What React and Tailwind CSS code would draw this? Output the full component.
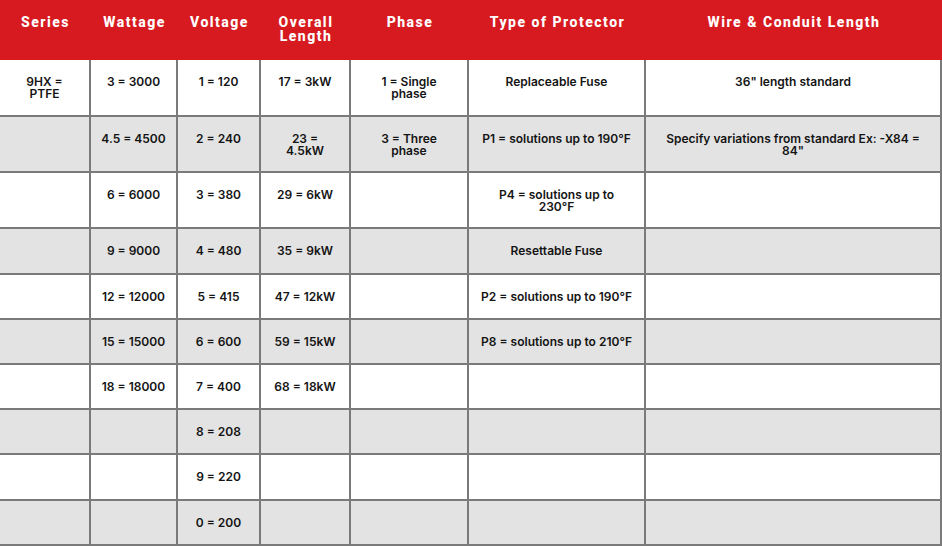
import React from 'react';

const cols = [
    { title: 'Series', w: 'w-[91px]' },
    { title: 'Wattage', w: 'w-[87px]' },
    { title: 'Voltage', w: 'w-[83px]' },
    { title: ['Overall', 'Length'], w: 'w-[90px]' },
    { title: 'Phase', w: 'w-[118px]' },
    { title: 'Type of Protector', w: 'w-[177px]' },
    { title: 'Wire & Conduit Length', w: 'w-[296px]' },
];

const rows = [
    { h: 'h-[57px]', cells: [['9HX =', 'PTFE'], '3 = 3000', '1 = 120', '17 = 3kW', ['1 = Single', 'phase'], 'Replaceable Fuse', '36" length standard'] },
    { h: 'h-[56px]', cells: ['', '4.5 = 4500', '2 = 240', ['23 =', '4.5kW'], ['3 = Three', 'phase'], 'P1 = solutions up to 190°F', ['Specify variations from standard Ex: -X84 =', '84"']] },
    { h: 'h-[56px]', cells: ['', '6 = 6000', '3 = 380', '29 = 6kW', '', ['P4 = solutions up to', '230°F'], ''] },
    { h: 'h-[46px]', cells: ['', '9 = 9000', '4 = 480', '35 = 9kW', '', 'Resettable Fuse', ''] },
    { h: 'h-[45px]', cells: ['', '12 = 12000', '5 = 415', '47 = 12kW', '', 'P2 = solutions up to 190°F', ''] },
    { h: 'h-[45px]', cells: ['', '15 = 15000', '6 = 600', '59 = 15kW', '', 'P8 = solutions up to 210°F', ''] },
    { h: 'h-[45px]', cells: ['', '18 = 18000', '7 = 400', '68 = 18kW', '', '', ''] },
    { h: 'h-[45px]', cells: ['', '', '8 = 208', '', '', '', ''] },
    { h: 'h-[46px]', cells: ['', '', '9 = 220', '', '', '', ''] },
    { h: 'h-[45px]', cells: ['', '', '0 = 200', '', '', '', ''] },
];

function Lines({ value }) {
    const list = Array.isArray(value) ? value : [value];
    return list.map((line, i) => <div key={i} className="whitespace-nowrap">{line}</div>);
}

export default function App() {
    return (
        <div className="w-[942px] h-[546px] overflow-hidden bg-white">
            <div className="flex h-[60px] bg-[#d71a1f] text-white font-['Roboto',sans-serif] font-extrabold text-[14px] leading-[14px] tracking-[1.5px]">
                {cols.map((c, i) => (
                    <div key={i} className={`${c.w} shrink-0 pt-[15px] text-center`}>
                        <Lines value={c.title} />
                    </div>
                ))}
            </div>
            {rows.map((r, ri) => (
                <div key={ri} className={`flex ${r.h} ${ri % 2 === 1 ? 'bg-[#e3e3e3]' : 'bg-white'}`}>
                    {r.cells.map((cell, ci) => (
                        <div
                            key={ci}
                            className={`${cols[ci].w} shrink-0 flex flex-col items-center border-r-2 border-b-2 border-[#7a7a7a] pt-[16px] text-center font-['Inter',sans-serif] font-semibold text-[12px] leading-[12px] text-[#141414]`}
                        >
                            <Lines value={cell} />
                        </div>
                    ))}
                </div>
            ))}
        </div>
    );
}
